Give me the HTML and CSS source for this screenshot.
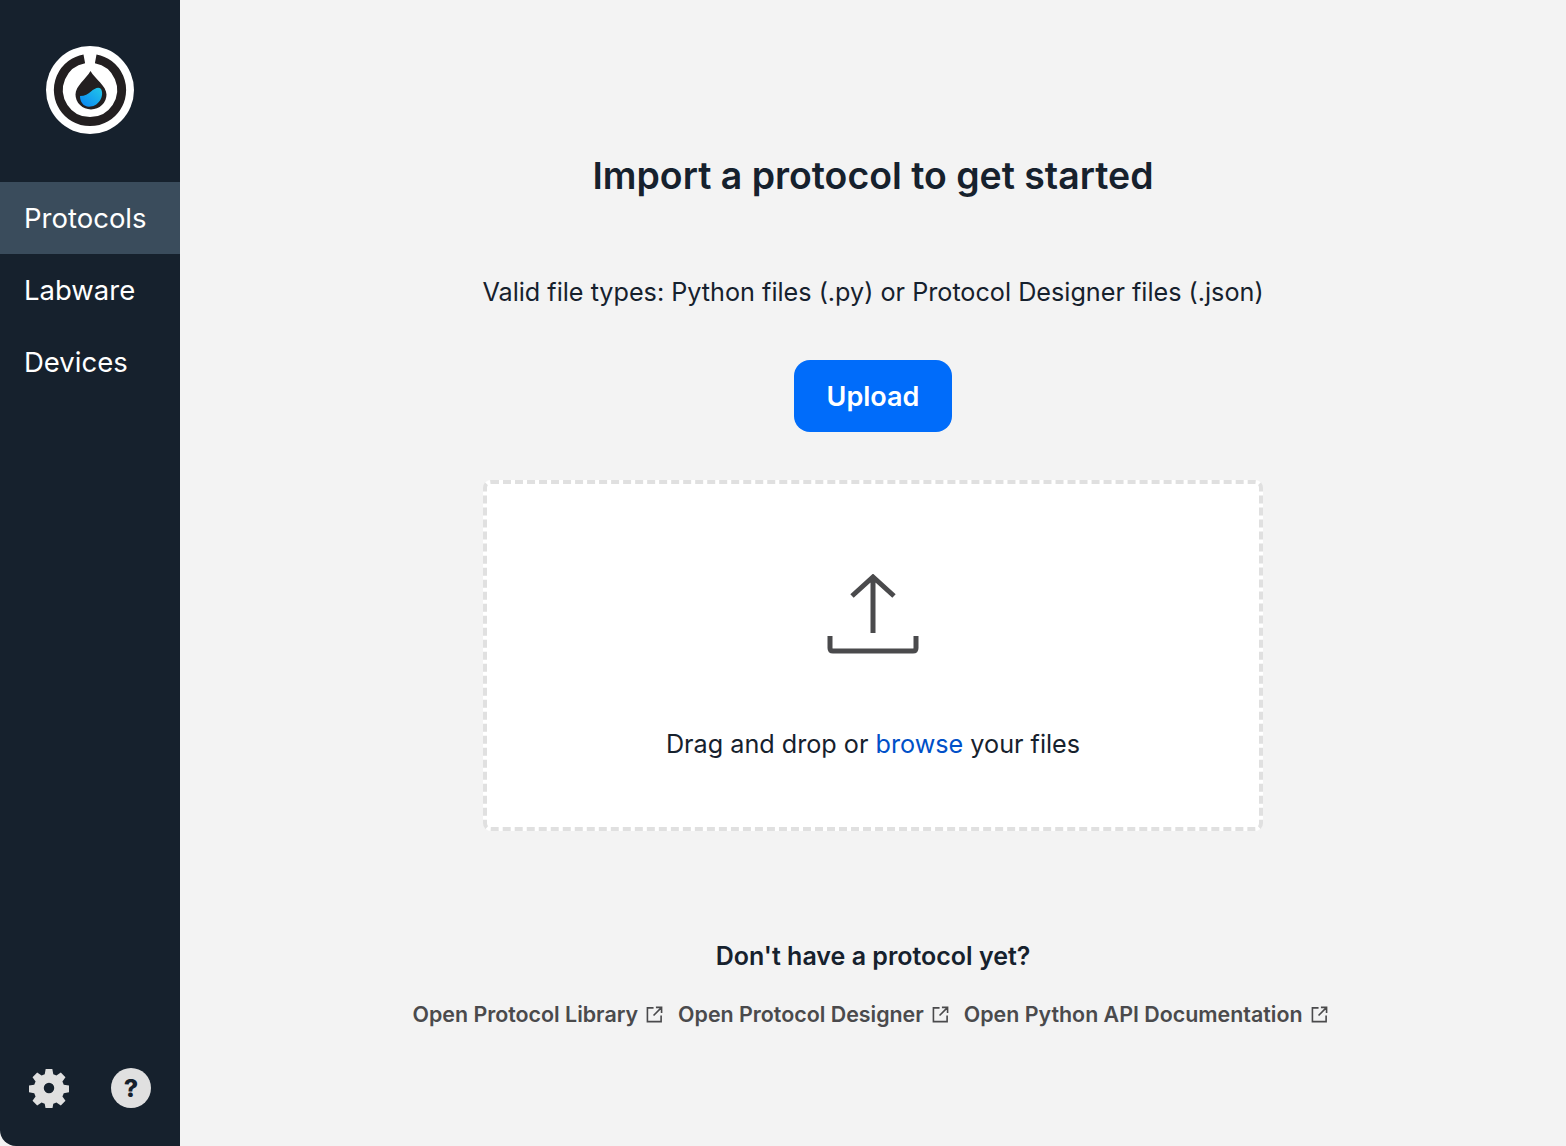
FILE: index.html
```html
<!DOCTYPE html>
<html lang="en">
<head>
  <meta charset="UTF-8" />
  <title>Protocols</title>
  <link rel="stylesheet" href="styles.css">
</head>
<body>
  <div class="app">
    <aside class="sidebar">
      <div class="logo-container">
        <svg class="logo" width="88" height="88" viewBox="0 0 88 88">
          <defs>
            <linearGradient id="water" x1="0" y1="1" x2="1" y2="0">
              <stop offset="0" stop-color="#0a84f4"/>
              <stop offset="1" stop-color="#22c8e8"/>
            </linearGradient>
          </defs>
          <circle cx="44" cy="44" r="44" fill="#fff"/>
          <path d="M38.300 12.900A31.600 31.600 0 1 0 49.700 12.900" fill="none" stroke="#231f20" stroke-width="9"/>
          <path d="M44.500 25C40 33 29.500 40 29.500 48.500A15.500 15 0 0 0 60.500 48.500C60.500 40 49 33 44.500 25Z" fill="#231f20"/>
          <path d="M34 50C39 50 42 48 45 45.500C48 43 52 40.500 54.500 42.500C57 45 56.500 51 54 54.500C51 59 47 60.700 43 60.700C37.500 60.700 34 56 34 50Z" fill="url(#water)"/>
        </svg>
      </div>
      <nav class="nav-list">
        <a class="nav-item active" href="#">Protocols</a>
        <a class="nav-item" href="#">Labware</a>
        <a class="nav-item" href="#">Devices</a>
      </nav>
      <div class="sidebar-icons">
        <svg width="40" height="40" viewBox="0 0 42 42">
          <path fill="#e0e0e0" fill-rule="evenodd" d="M17.500 1h7l1 5.500 3.300 1.400 4.600-3.200 4.900 4.900-3.200 4.600 1.400 3.300 5.500 1v7l-5.500 1-1.400 3.300 3.200 4.600-4.900 4.900-4.600-3.200-3.300 1.400-1 5.500h-7l-1-5.500-3.300-1.400-4.600 3.200-4.900-4.900 3.200-4.600-1.400-3.300-5.500-1v-7l5.500-1 1.400-3.300-3.200-4.600 4.900-4.900 4.600 3.200 3.300-1.400zM21 15.500a5.500 5.500 0 1 0 0 11 5.500 5.500 0 0 0 0-11z"/>
        </svg>
        <div class="help-icon">?</div>
      </div>
    </aside>

    <main class="main">
      <h1 class="title">Import a protocol to get started</h1>
      <p class="file-types">Valid file types: Python files (.py) or Protocol Designer files (.json)</p>
      <button class="upload-button" type="button">Upload</button>
      <div class="drop-zone">
        <svg class="upload-icon" width="92" height="80" viewBox="0 0 92 80">
          <path d="M46 59V4M25 22L46 3L67 22" fill="none" stroke="#4a4a4c" stroke-width="5"/>
          <path d="M3 62V74Q3 77 6 77H86Q89 77 89 74V62" fill="none" stroke="#4a4a4c" stroke-width="5"/>
        </svg>
        <p class="drop-text">Drag and drop or <a href="#">browse</a> your files</p>
      </div>
      <h2 class="subtitle">Don't have a protocol yet?</h2>
      <div class="links">
        <a class="ext-link" href="#">Open Protocol Library
          <svg width="17" height="17" viewBox="0 0 18 18"><path d="M8 2H1.500V16.500H16V10M10.500 1.500H16.500V7.500M16 2L8 10" fill="none" stroke="#4a4a4c" stroke-width="1.700"/></svg>
        </a>
        <a class="ext-link" href="#">Open Protocol Designer
          <svg width="17" height="17" viewBox="0 0 18 18"><path d="M8 2H1.500V16.500H16V10M10.500 1.500H16.500V7.500M16 2L8 10" fill="none" stroke="#4a4a4c" stroke-width="1.700"/></svg>
        </a>
        <a class="ext-link" href="#">Open Python API Documentation
          <svg width="17" height="17" viewBox="0 0 18 18"><path d="M8 2H1.500V16.500H16V10M10.500 1.500H16.500V7.500M16 2L8 10" fill="none" stroke="#4a4a4c" stroke-width="1.700"/></svg>
        </a>
      </div>
    </main>
  </div>
</body>
</html>
```

FILE: styles.css
```css
body {
  margin: 0;
  padding: 0;
  background-color: #fff;
  font-family: 'Inter', 'Liberation Sans', sans-serif;
  color: #16212d;
}

.app {
  display: flex;
  height: 1146px;
  background-color: #f3f3f3;
}

.sidebar {
  width: 180px;
  flex-shrink: 0;
  display: flex;
  flex-direction: column;
  background-color: #16212d;
  border-bottom-left-radius: 16px;
}

.logo-container {
  height: 182px;
  display: flex;
  justify-content: center;
  padding-top: 46px;
  box-sizing: border-box;
}

.nav-list {
  display: flex;
  flex-direction: column;
  flex: 1;
}

.nav-item {
  height: 72px;
  display: flex;
  align-items: center;
  padding-left: 24px;
  color: #fff;
  font-size: 27.5px;
  text-decoration: none;
}

.nav-item.active {
  background-color: #3a4c5c;
}

.sidebar-icons {
  display: flex;
  align-items: center;
  gap: 42px;
  padding: 0 0 38px 29px;
}

.help-icon {
  width: 40px;
  height: 40px;
  border-radius: 50%;
  background-color: #e0e0e0;
  color: #16212d;
  font-size: 25px;
  font-weight: 800;
  display: flex;
  align-items: center;
  justify-content: center;
}

.main {
  flex: 1;
  display: flex;
  flex-direction: column;
  align-items: center;
  padding-top: 152px;
}

.title {
  margin: 0;
  font-size: 37.4px;
  line-height: 48px;
  font-weight: 600;
}

.file-types {
  margin: 74px 0 0;
  font-size: 25.2px;
  line-height: 36px;
}

.upload-button {
  margin-top: 50px;
  width: 158px;
  height: 72px;
  border: none;
  border-radius: 16px;
  background-color: #006cfa;
  color: #fff;
  font-family: inherit;
  font-size: 27px;
  font-weight: 600;
}

.drop-zone {
  margin-top: 48px;
  width: 780px;
  height: 351px;
  box-sizing: border-box;
  border: 4px dashed #e0e0e0;
  border-radius: 8px;
  background-color: #fff;
  display: flex;
  flex-direction: column;
  align-items: center;
  padding-top: 90px;
}

.drop-text {
  margin: 72px 0 0;
  font-size: 25.2px;
  line-height: 36px;
}

.drop-text a {
  color: #0050c8;
  text-decoration: none;
}

.subtitle {
  margin: 107px 0 0;
  font-size: 25px;
  line-height: 36px;
  font-weight: 600;
}

.links {
  display: flex;
  gap: 15px;
  margin-top: 22px;
  padding-right: 6px;
}

.ext-link {
  display: flex;
  align-items: center;
  gap: 8px;
  color: #4a4a4c;
  font-size: 21.4px;
  line-height: 36px;
  font-weight: 600;
  text-decoration: none;
  white-space: nowrap;
}
```
